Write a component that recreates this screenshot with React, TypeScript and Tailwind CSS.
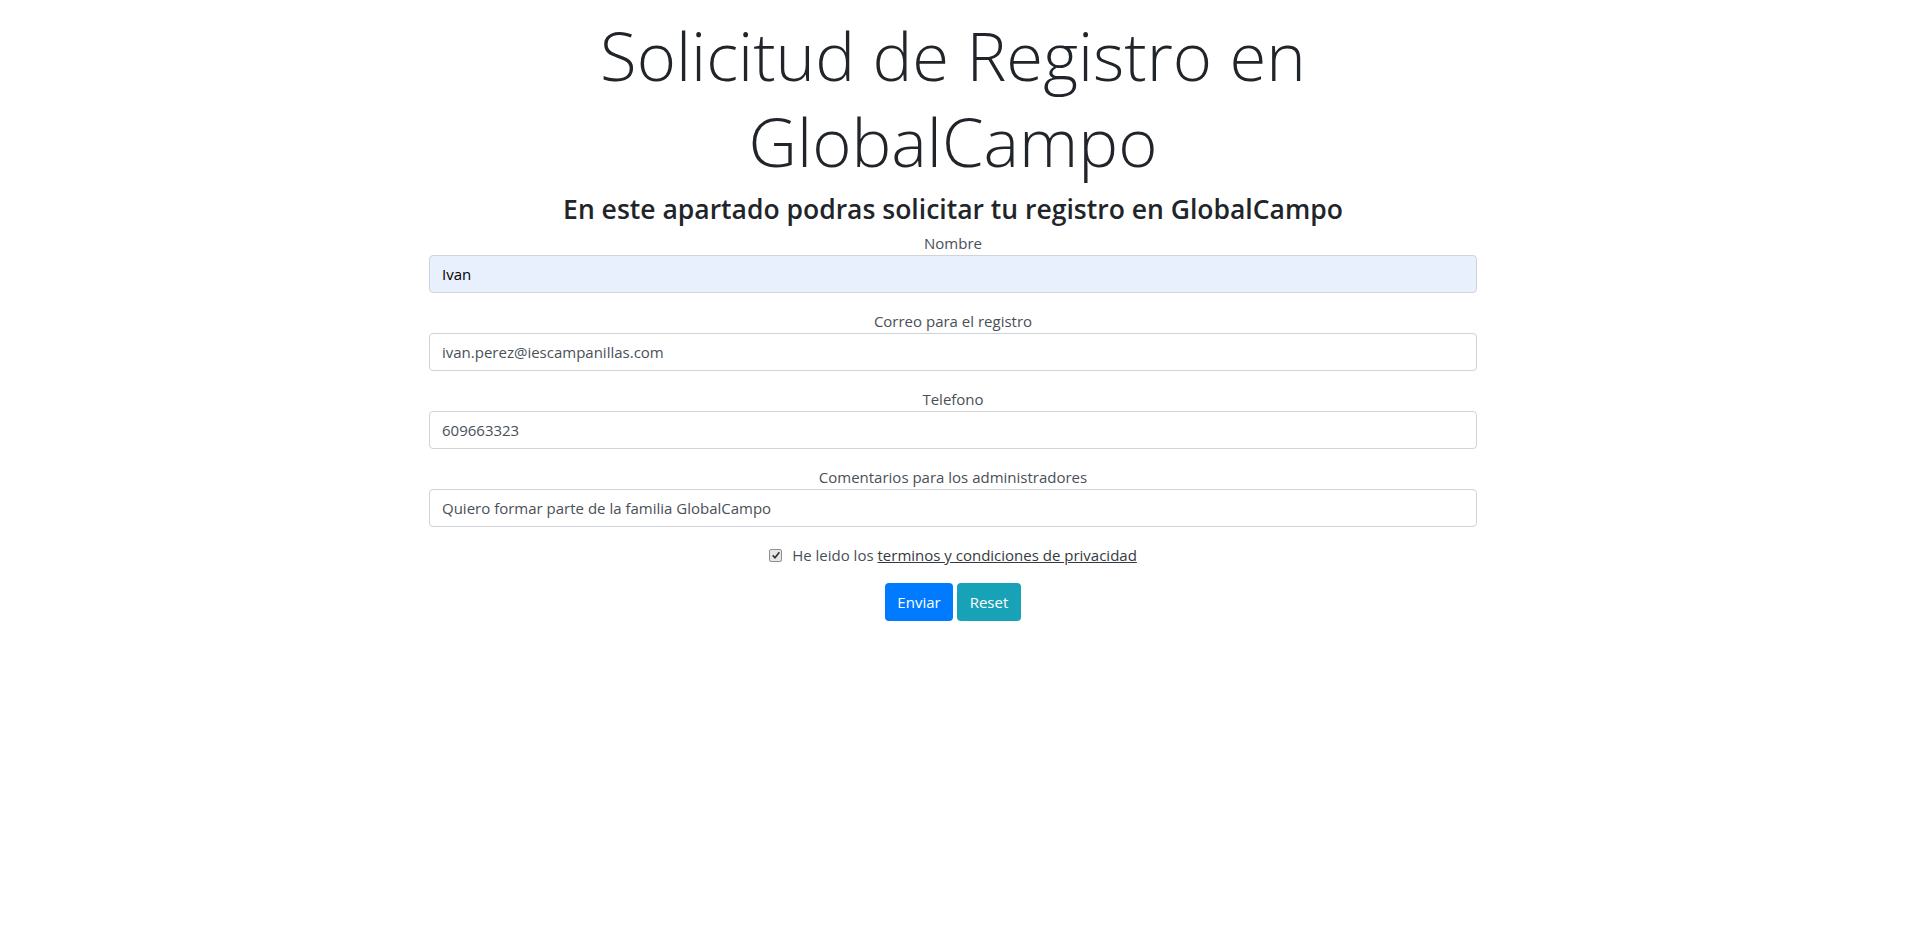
import React, { useState } from 'react';

const fieldFont = { fontFamily: '"Open Sans", "Noto Sans", sans-serif' };

interface Field {
  id: string;
  label: string;
  value: string;
  autofill?: boolean;
}

const fields: Field[] = [
  { id: 'nombre', label: 'Nombre', value: 'Ivan', autofill: true },
  { id: 'correo', label: 'Correo para el registro', value: 'ivan.perez@iescampanillas.com' },
  { id: 'telefono', label: 'Telefono', value: '609663323' },
  { id: 'comentarios', label: 'Comentarios para los administradores', value: 'Quiero formar parte de la familia GlobalCampo' },
];

export default function App() {
  const [values, setValues] = useState<Record<string, string>>(
    Object.fromEntries(fields.map((f) => [f.id, f.value]))
  );
  const [accepted, setAccepted] = useState(true);

  return (
    <main className="min-h-screen bg-white text-[#212529] pr-[7px] flex justify-center" style={fieldFont}>
      <div className="w-[1048px] pt-[12px]">
        <h1 className="text-center text-[67px] font-light leading-[86.4px] mb-2">
          Solicitud de Registro en GlobalCampo
        </h1>
        <h3 className="text-center text-[26.5px] font-semibold leading-[33.6px] mb-[5px]">
          En este apartado podras solicitar tu registro en GlobalCampo
        </h3>

        <form onSubmit={(event) => event.preventDefault()}>
          {fields.map((field) => (
            <div key={field.id} className="mb-4">
              <label htmlFor={field.id} className="block text-center text-[15px] leading-6 text-[#495057]">
                {field.label}
              </label>
              <input
                id={field.id}
                type="text"
                value={values[field.id]}
                onChange={(event) => setValues({ ...values, [field.id]: event.target.value })}
                className={
                  field.autofill
                    ? 'block w-full h-[38px] px-3 py-1.5 text-[15px] border border-[#ced4da] rounded bg-[#e8f0fe] text-black outline-none'
                    : 'block w-full h-[38px] px-3 py-1.5 text-[15px] border border-[#ced4da] rounded bg-white text-[#495057] outline-none'
                }
              />
            </div>
          ))}

          <div className="flex items-center justify-center h-6 mb-4 text-[15px] text-[#495057]">
            <button
              type="button"
              onClick={() => setAccepted(!accepted)}
              className="w-[13px] h-[13px] mr-[10px] border border-[#8f8f8f] rounded-[2px] bg-[#e6e6e6] flex items-center justify-center"
            >
              {accepted ? (
                <svg viewBox="0 0 12 12" className="w-[10px] h-[10px]">
                  <path d="M2 6.5 L4.8 9.2 L10 2.8" fill="none" stroke="#333" strokeWidth="2" />
                </svg>
              ) : null}
            </button>
            <span>
              He leido los{' '}
              <a href="#" className="underline text-[#343a40]">
                terminos y condiciones de privacidad
              </a>
            </span>
          </div>

          <div className="flex justify-center gap-1">
            <button type="submit" className="h-[38px] w-[68px] text-[15px] text-white bg-[#007bff] rounded">
              Enviar
            </button>
            <button type="reset" className="h-[38px] w-[64px] text-[15px] text-white bg-[#17a2b8] rounded">
              Reset
            </button>
          </div>
        </form>
      </div>
    </main>
  );
}
